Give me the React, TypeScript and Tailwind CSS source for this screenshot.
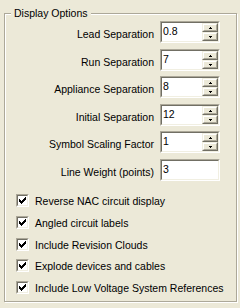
import React from "react";

const rows: { label: string; value: string; spin: boolean; mt: string }[] = [
  { label: "Lead Separation", value: "0.8", spin: true, mt: "mt-0" },
  { label: "Run Separation", value: "7", spin: true, mt: "mt-[6px]" },
  { label: "Appliance Separation", value: "8", spin: true, mt: "mt-[5px]" },
  { label: "Initial Separation", value: "12", spin: true, mt: "mt-[6px]" },
  { label: "Symbol Scaling Factor", value: "1", spin: true, mt: "mt-[5px]" },
  { label: "Line Weight (points)", value: "3", spin: false, mt: "mt-[6px]" },
];

const checks: { label: string; mt: string }[] = [
  { label: "Reverse NAC circuit display", mt: "mt-0" },
  { label: "Angled circuit labels", mt: "mt-[8px]" },
  { label: "Include Revision Clouds", mt: "mt-[8px]" },
  { label: "Explode devices and cables", mt: "mt-[7px]" },
  { label: "Include Low Voltage System References", mt: "mt-[8px]" },
];

function Arrow({ up }: { up: boolean }) {
  return (
    <svg width="3" height="2" viewBox="0 0 3 2" shapeRendering="crispEdges" className="block">
      {up ? (
        <>
          <rect x="1" y="0" width="1" height="1" fill="#000" />
          <rect x="0" y="1" width="3" height="1" fill="#000" />
        </>
      ) : (
        <>
          <rect x="0" y="0" width="3" height="1" fill="#000" />
          <rect x="1" y="1" width="1" height="1" fill="#000" />
        </>
      )}
    </svg>
  );
}

function SpinBtn({ up }: { up: boolean }) {
  return (
    <div className="w-[16px] h-[9px] bg-[#ece9d8] border border-t-[#f1efe2] border-l-[#f1efe2] border-r-[#716f64] border-b-[#716f64]">
      <div className="w-full h-full border border-t-white border-l-white border-r-[#aca899] border-b-[#aca899] flex items-center justify-center">
        <Arrow up={up} />
      </div>
    </div>
  );
}

function Field({ value, spin }: { value: string; spin: boolean }) {
  return (
    <div className="w-[60px] h-[22px] border border-t-[#aca899] border-l-[#aca899] border-r-white border-b-white">
      <div className="w-full h-full border border-t-[#716f64] border-l-[#716f64] border-r-[#f1efe2] border-b-[#f1efe2] bg-white flex">
        <div className="flex-1 pl-[1px] pt-[2px] leading-[13px] text-black">{value}</div>
        {spin && (
          <div className="flex flex-col">
            <SpinBtn up />
            <SpinBtn up={false} />
          </div>
        )}
      </div>
    </div>
  );
}

function Check() {
  return (
    <div className="w-[13px] h-[13px] shrink-0 border border-t-[#aca899] border-l-[#aca899] border-r-white border-b-white">
      <div className="w-full h-full border border-t-[#716f64] border-l-[#716f64] border-r-[#f1efe2] border-b-[#f1efe2] bg-white relative">
        <svg width="7" height="7" viewBox="0 0 7 7" shapeRendering="crispEdges" className="absolute left-[1px] top-[1px]">
          <rect x="6" y="0" width="1" height="1" fill="#000" />
          <rect x="5" y="1" width="2" height="1" fill="#000" />
          <rect x="0" y="2" width="1" height="1" fill="#000" />
          <rect x="4" y="2" width="3" height="1" fill="#000" />
          <rect x="0" y="3" width="2" height="1" fill="#000" />
          <rect x="3" y="3" width="3" height="1" fill="#000" />
          <rect x="0" y="4" width="5" height="1" fill="#000" />
          <rect x="1" y="5" width="3" height="1" fill="#000" />
          <rect x="2" y="6" width="1" height="1" fill="#000" />
        </svg>
      </div>
    </div>
  );
}

export default function App() {
  return (
    <div className="w-[240px] h-[308px] bg-[#ece9d8] pt-[13px] pl-[4px] font-['Liberation_Sans',Arial,sans-serif] text-[10.5px] text-black overflow-hidden">
      <div className="relative w-[233px] h-[289px] border border-[#aca899] shadow-[inset_1px_1px_0_#ffffff,1px_1px_0_#ffffff]">
        <span className="absolute left-[6px] top-[-7px] px-[3px] bg-[#ece9d8] leading-[13px] whitespace-nowrap">
          Display Options
        </span>
        <div className="pt-[7px] flex flex-col">
          {rows.map((r) => (
            <div key={r.label} className={`flex items-start ${r.mt}`}>
              <div className="w-[149px] text-right pt-[7px] leading-[13px] whitespace-nowrap">{r.label}</div>
              <div className="ml-[6px]">
                <Field value={r.value} spin={r.spin} />
              </div>
            </div>
          ))}
        </div>
        <div className="mt-[13px] pl-[11px] flex flex-col">
          {checks.map((c) => (
            <div key={c.label} className={`flex items-start ${c.mt}`}>
              <Check />
              <div className="ml-[6px] pt-[1px] leading-[13px] whitespace-nowrap">{c.label}</div>
            </div>
          ))}
        </div>
      </div>
    </div>
  );
}
